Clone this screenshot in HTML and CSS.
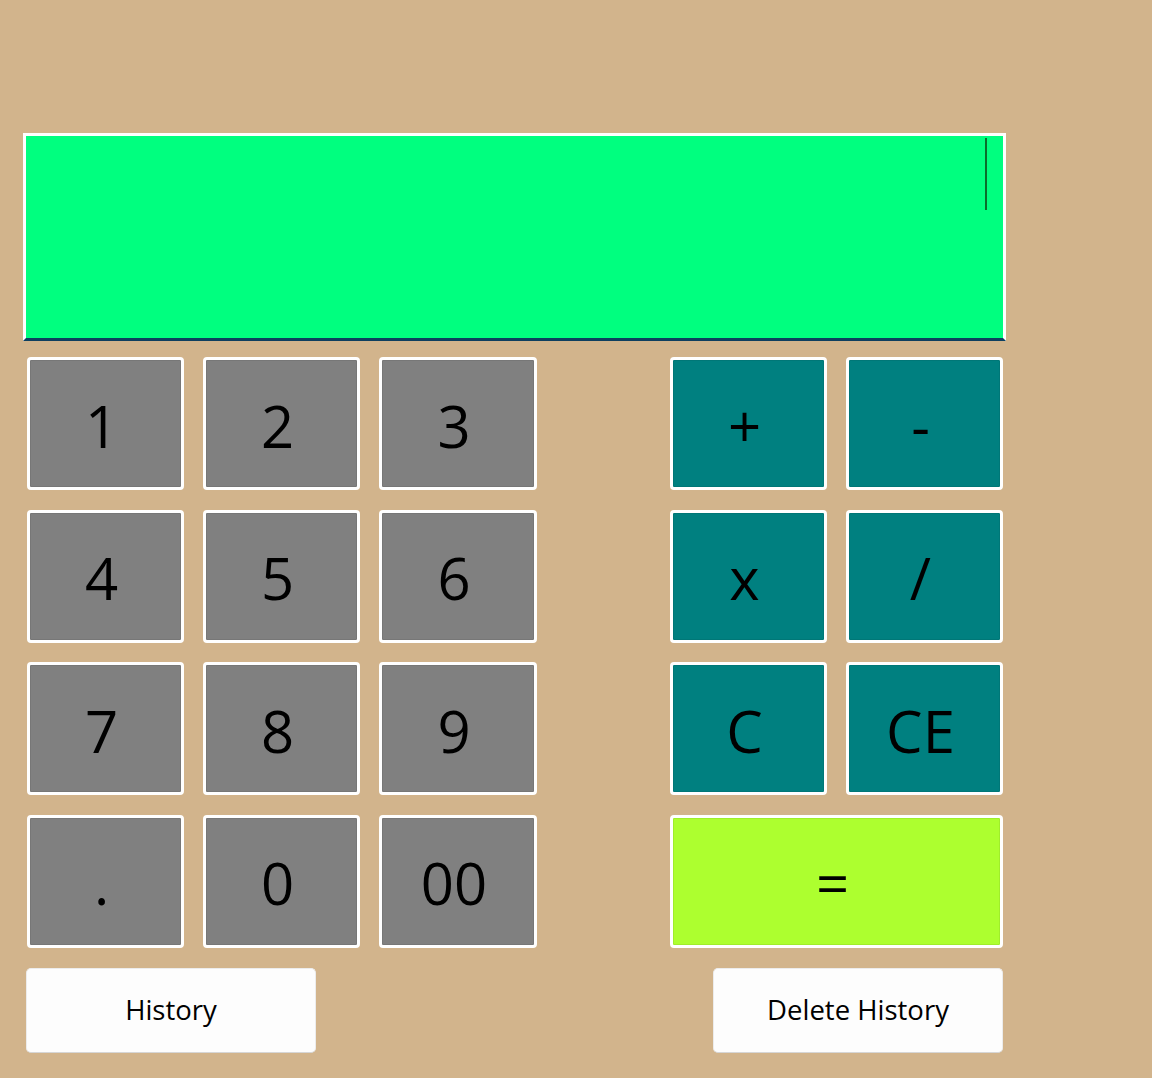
FILE: index.html
```html
<!DOCTYPE html>
<html lang="en">
<head>
<meta charset="utf-8">
<title>Calculator</title>
<link rel="stylesheet" href="styles.css">
</head>
<body>
<main class="calc">
  <div class="display"><span class="caret"></span></div>
  <div class="keys">
    <button class="key num">1</button>
    <button class="key num">2</button>
    <button class="key num">3</button>
    <span class="spacer"></span>
    <button class="key op">+</button>
    <button class="key op">-</button>

    <button class="key num">4</button>
    <button class="key num">5</button>
    <button class="key num">6</button>
    <span class="spacer"></span>
    <button class="key op">x</button>
    <button class="key op">/</button>

    <button class="key num">7</button>
    <button class="key num">8</button>
    <button class="key num">9</button>
    <span class="spacer"></span>
    <button class="key op">C</button>
    <button class="key op">CE</button>

    <button class="key num">.</button>
    <button class="key num">0</button>
    <button class="key num">00</button>
    <span class="spacer"></span>
    <button class="key eq">=</button>
  </div>
  <div class="history-row">
    <button class="hbtn">History</button>
    <button class="hbtn">Delete History</button>
  </div>
</main>
</body>
</html>
```

FILE: styles.css
```css
html, body {
  margin: 0;
  padding: 0;
  background: #d2b48c;
  height: 100%;
}

body {
  font-family: "Open Sans", "Noto Sans", sans-serif;
  color: #000;
}

.calc {
  width: 983px;
  padding: 133px 0 0 23px;
  display: flex;
  flex-direction: column;
}

.display {
  height: 208px;
  box-sizing: border-box;
  background: #00ff7f;
  border: 3px solid #ffffff;
  border-bottom: 3px solid #0d3f5f;
  display: flex;
  justify-content: flex-end;
  align-items: flex-start;
  padding: 2px 16px 0 0;
}

.caret {
  width: 2px;
  height: 72px;
  background: #0a6e2c;
}

.keys {
  margin: 16px 0 0 4px;
  display: grid;
  grid-template-columns: 157px 157px 158px 95px 157px 157px;
  grid-auto-rows: 133px;
  column-gap: 19px;
  row-gap: 19.5px;
}

.key {
  font-family: "Open Sans", "Noto Sans", sans-serif;
  font-size: 58px;
  font-weight: 400;
  color: #000;
  border: 3px solid #ffffff;
  border-radius: 4px;
  box-shadow: inset 0 0 0 1px rgba(0, 0, 0, 0.07);
  display: flex;
  align-items: center;
  justify-content: center;
  padding: 4px 8px 0 0;
  margin: 0;
  line-height: 1;
  cursor: pointer;
}

.num {
  background: #808080;
}

.op {
  background: #008080;
}

.eq {
  background: #adff2f;
  grid-column: span 2;
}

.history-row {
  margin: 20px 3px 0 3px;
  display: flex;
  justify-content: space-between;
}

.hbtn {
  width: 290px;
  height: 85px;
  box-sizing: border-box;
  background: #fdfdfd;
  border: 1px solid #ececec;
  border-bottom-color: #d6d6d6;
  border-radius: 5px;
  font-family: "Open Sans", "Noto Sans", sans-serif;
  font-size: 27.5px;
  color: #000;
  padding: 0 0 2px 0;
  cursor: pointer;
}
```
